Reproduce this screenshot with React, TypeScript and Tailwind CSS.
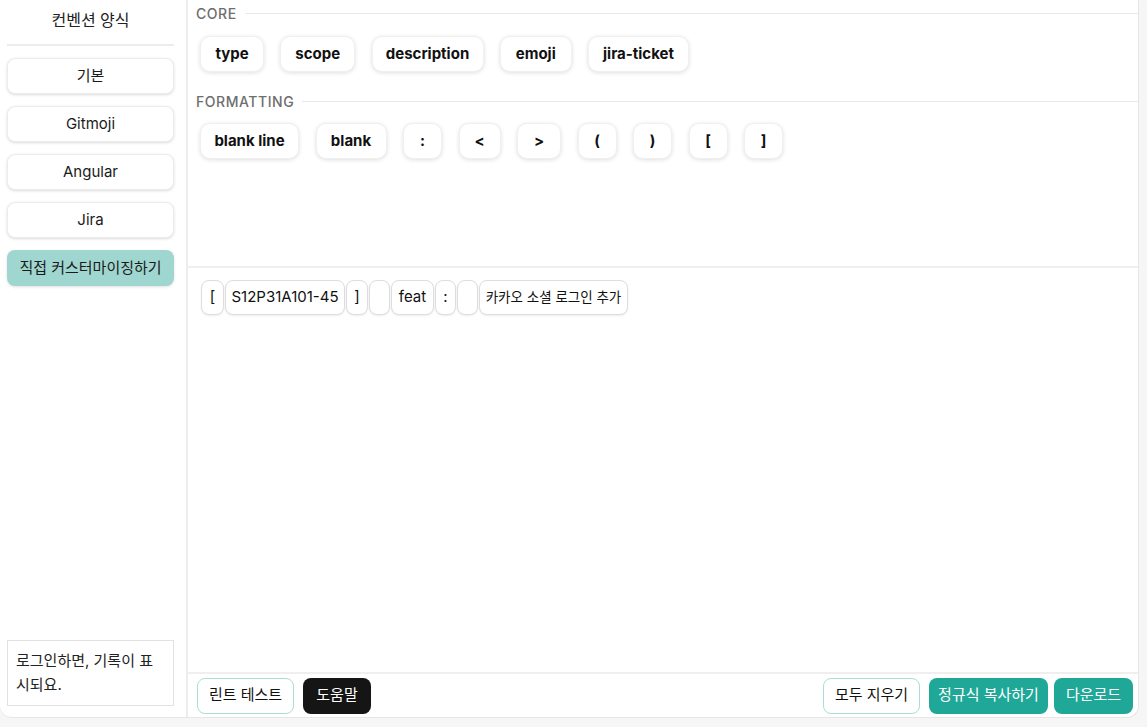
import React from "react";

const FONT = "font-['Inter','Noto_Sans_CJK_KR',sans-serif]";

const conventions = ["기본", "Gitmoji", "Angular", "Jira", "직접 커스터마이징하기"];

const coreTokens = [
  { label: "type", w: "w-[64px]" },
  { label: "scope", w: "w-[75px]" },
  { label: "description", w: "w-[112px]" },
  { label: "emoji", w: "w-[72px]" },
  { label: "jira-ticket", w: "w-[101px]" },
];

const formatTokens = [
  { label: "blank line", w: "w-[99px]" },
  { label: "blank", w: "w-[71px]" },
  { label: ":", w: "w-[39px]" },
  { label: "<", w: "w-[42px]" },
  { label: ">", w: "w-[44px]" },
  { label: "(", w: "w-[39px]" },
  { label: ")", w: "w-[39px]" },
  { label: "[", w: "w-[39px]" },
  { label: "]", w: "w-[39px]" },
];

const resultTokens = [
  { label: "[", w: "w-[23px] text-[15px]" },
  { label: "S12P31A101-45", w: "w-[120px] text-[15px]" },
  { label: "]", w: "w-[22px] text-[15px]" },
  { label: "\u00a0", w: "w-[21px] text-[15px]" },
  { label: "feat", w: "w-[43px] text-[15px]" },
  { label: ":", w: "w-[21px] text-[15px]" },
  { label: "\u00a0", w: "w-[21px] text-[15px]" },
  { label: "카카오 소셜 로그인 추가", w: "w-[149px] text-[13.5px]" },
];

function SectionLabel({ label }: { label: string }) {
  return (
    <div className="flex items-center gap-2 h-[26px] pl-2">
      <span className="text-[14px] tracking-[0.04em] text-[#6e6e6e] font-medium">{label}</span>
      <div className="flex-1 h-px bg-[#e8e8e8]" />
    </div>
  );
}

function TokenButton({ label, w }: { label: string; w: string }) {
  return (
    <button
      className={`${w} h-[36px] rounded-[10px] bg-white border border-[#f0f0f0] shadow-[0_1px_4px_rgba(0,0,0,0.13)] text-[15px] font-bold text-[#111]`}
    >
      {label}
    </button>
  );
}

export default function App() {
  return (
    <div className={`w-[1147px] h-[727px] bg-[#f6f6f6] ${FONT}`}>
      <div className="w-[1139px] h-[718px] bg-white rounded-b-xl border-r border-b border-[#e6e6e6] flex overflow-hidden">
        {/* Sidebar */}
        <aside className="w-[188px] border-r-2 border-[#ededed] pl-[7px] pr-[12px] flex flex-col">
          <div className="pt-2 pb-3 border-b-2 border-[#ececec] text-center text-[16px] leading-6 text-[#222]">
            컨벤션 양식
          </div>
          <div className="mt-3 flex flex-col gap-3">
            {conventions.map((c, i) => (
              <button
                key={c}
                className={
                  i === 4
                    ? "h-[36px] rounded-lg bg-[#9fd6cf] text-[15px] text-[#1a1a1a] shadow-[0_1px_3px_rgba(0,0,0,0.12)]"
                    : "h-[36px] rounded-lg bg-white border border-[#ececec] text-[15px] text-[#1a1a1a] shadow-[0_1px_3px_rgba(0,0,0,0.14)]"
                }
              >
                {c}
              </button>
            ))}
          </div>
          <div className="mt-auto mb-[11px] border border-[#e2e2e2] px-2 py-[8px] text-[15px] leading-6 text-[#222]">
            로그인하면, 기록이 표시되요.
          </div>
        </aside>

        {/* Main */}
        <main className="flex-1 flex flex-col">
          <section className="h-[268px] border-b-2 border-[#efefef]">
            <SectionLabel label="CORE" />
            <div className="flex gap-[16.25px] pl-3 mt-[10px]">
              {coreTokens.map((t) => (
                <TokenButton key={t.label} label={t.label} w={t.w} />
              ))}
            </div>
            <div className="mt-[16px]">
              <SectionLabel label="FORMATTING" />
            </div>
            <div className="flex gap-[16.5px] pl-3 mt-[9px]">
              {formatTokens.map((t, i) => (
                <TokenButton key={i} label={t.label} w={t.w} />
              ))}
            </div>
          </section>

          <section className="flex-1 pt-3 pl-[13px]">
            <div className="flex gap-px">
              {resultTokens.map((t, i) => (
                <span
                  key={i}
                  className={`${t.w} h-[35px] flex items-center justify-center rounded-lg border border-[#dedede] bg-white shadow-[0_1px_2px_rgba(0,0,0,0.08)] text-[#111] whitespace-nowrap`}
                >
                  {t.label}
                </span>
              ))}
            </div>
          </section>

          <footer className="h-[45px] border-t-2 border-[#efefef] flex items-center pl-[9px] pr-[5px]">
            <button className="h-[36px] w-[97px] rounded-lg border border-[#a9ddd6] bg-white text-[15px] text-[#111]">
              린트 테스트
            </button>
            <button className="ml-[9px] h-[36px] w-[68px] rounded-lg bg-[#151515] text-[15px] text-white">
              도움말
            </button>
            <div className="ml-auto flex items-center">
              <button className="h-[36px] w-[97px] rounded-lg border border-[#a9ddd6] bg-white text-[15px] text-[#111]">
                모두 지우기
              </button>
              <button className="ml-[9px] h-[36px] w-[119px] rounded-lg bg-[#1fa898] text-[15px] text-white">
                정규식 복사하기
              </button>
              <button className="ml-[6px] h-[36px] w-[79px] rounded-lg bg-[#1fa898] text-[15px] text-white">
                다운로드
              </button>
            </div>
          </footer>
        </main>
      </div>
    </div>
  );
}
